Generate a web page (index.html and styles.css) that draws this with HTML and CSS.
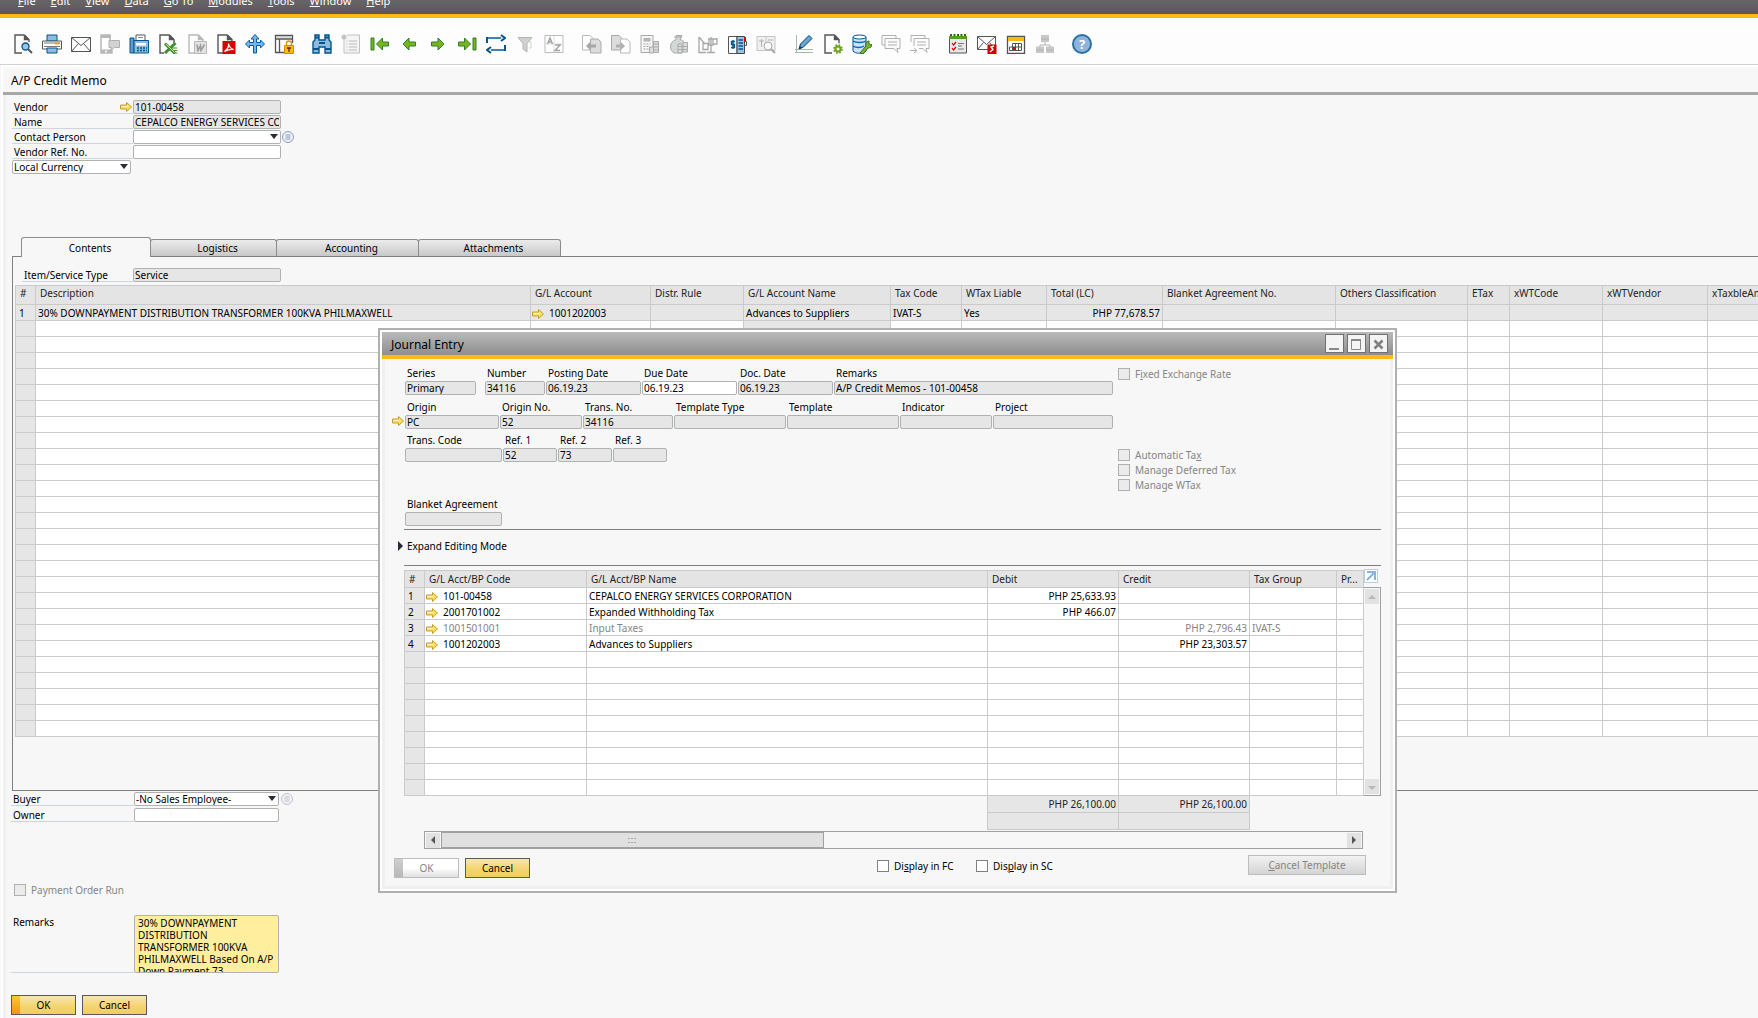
FILE: index.html
```html
<!DOCTYPE html>
<html lang="en">
<head>
    <meta charset="UTF-8">
    <meta name="viewport" content="width=device-width, initial-scale=1.0">
    <title>A/P Credit Memo</title>
    <link rel="stylesheet" href="styles.css">
</head>
<body>
    <!-- Shared symbols -->
    <svg class="symbols" aria-hidden="true">
        <symbol id="link-arrow" viewBox="0 0 12 10">
            <path d="M.5 3h6V.5L11.5 5l-5 4.500V7h-6z" fill="#fae05a" stroke="#c4a02a"/>
            <path d="M1.500 4.500h6" stroke="#fff6b8"/>
        </symbol>
        <symbol id="list-circle" viewBox="0 0 12 12">
            <circle cx="6" cy="6" r="5.500" fill="#eef1f8" stroke="currentColor"/>
            <path d="M3.500 4h5M3.500 6h5M3.500 8h5" stroke="currentColor"/>
        </symbol>
        <symbol id="page" viewBox="0 0 20 20">
            <path d="M11.500 1H2v18h7M11.500 1L16 5.500V10M11.500 1v4.500H16" fill="none" stroke="currentColor" stroke-width="1.400"/>
            <path d="M11.500 1L16 5.500h-4.500z" fill="currentColor"/>
        </symbol>
    </svg>

    <nav class="menu">
        <a href="#"><u>F</u>ile</a>
        <a href="#"><u>E</u>dit</a>
        <a href="#"><u>V</u>iew</a>
        <a href="#"><u>D</u>ata</a>
        <a href="#"><u>G</u>o To</a>
        <a href="#"><u>M</u>odules</a>
        <a href="#"><u>T</u>ools</a>
        <a href="#"><u>W</u>indow</a>
        <a href="#"><u>H</u>elp</a>
    </nav>

    <div class="toolbar">
        <div class="tool-group">
            <button type="button" aria-label="Preview"><svg viewBox="0 0 20 20"><g color="#555"><use href="#page"/></g><path d="M8 8h10v10H8z" fill="#fdfdfd"/><circle cx="12.500" cy="12.500" r="3.500" fill="#9cc3e6" stroke="#00558a" stroke-width="1.300"/><path d="M15 15l4 4" stroke="#555" stroke-width="2"/></svg></button>
            <button type="button" aria-label="Print"><svg viewBox="0 0 20 20"><path d="M5 1h10v6H5z" fill="#8fbbe0" stroke="#00558a"/><path d="M.5 7h19v8H.5z" fill="#fff" stroke="#555"/><path d="M2 9h16M2 12.500h16" stroke="#777"/><path d="M13 9.500h4" stroke="#e8a020" stroke-width="2"/><path d="M5 14h10v5H5z" fill="#8fbbe0" stroke="#00558a"/></svg></button>
            <button type="button" aria-label="Email"><svg viewBox="0 0 20 20"><path d="M.5 3.500h19v14H.5zM.5 3.500l9.500 8 9.500-8M.5 17.500l7-8M19.500 17.500l-7-8" fill="#fff" fill-opacity=".3" stroke="#555"/></svg></button>
            <button type="button" aria-label="SMS"><svg viewBox="0 0 20 20"><path d="M10 7V1H1v18h11v-3" fill="#fff" stroke="#b8b8b8" stroke-width="1.500"/><path d="M1 1h10v3H1zM1 15.500h11V19H1z" fill="#b8b8b8"/><circle cx="6" cy="17.500" r="1" fill="#fff"/><path d="M9 6.500h10.500v7h-5l-4 3 1-3H9z" fill="#d2d2d2" stroke="#b0b0b0"/></svg></button>
            <button type="button" aria-label="Fax"><svg viewBox="0 0 20 20"><path d="M7 1h9v6H7z" fill="#fff" stroke="#555"/><path d="M9 3.500h5" stroke="#888"/><path d="M1 4h4v15H1z" fill="#5f9bcf" stroke="#00558a"/><path d="M5 6.500h14.500V19H5z" fill="#8fbbe0" stroke="#00558a"/><path d="M7 9h10v2.500H7z" fill="#fff"/><path d="M8 14h10M8 16.500h10" stroke="#00558a" stroke-width="1.500" stroke-dasharray="2 1"/></svg></button>
            <button type="button" aria-label="Export to Excel"><svg viewBox="0 0 20 20"><g color="#555"><use href="#page"/></g><path d="M6 9h13v11H6z" fill="#fdfdfd"/><path d="M7 9.500l10 10M17.500 9l-10.500 10" stroke="#3f8f2a" stroke-width="3"/><path d="M8 10l9 9" stroke="#c8e6b4"/><path d="M13 14h6M15 16.500h4.500M16 19h3.500" stroke="#3f8f2a"/></svg></button>
            <button type="button" aria-label="Export to Word"><svg viewBox="0 0 20 20"><g color="#b8b8b8"><use href="#page"/></g><path d="M7.500 7.500h12v12h-12z" fill="#e2e2e2" stroke="#b8b8b8"/><path d="M10 10.500l1 6 2.500-5 .5 5 3.500-6" fill="none" stroke="#999" stroke-width="1.500"/></svg></button>
            <button type="button" aria-label="Export to PDF"><svg viewBox="0 0 20 20"><g color="#555"><use href="#page"/></g><path d="M6.500 7h13v13h-13z" fill="#d90000"/><path d="M8.500 17.500c3-2 4.500-5 4-8 .5 3 2 5 5 6-4-.5-6 .5-9 2z" fill="none" stroke="#fff" stroke-width="1.300"/></svg></button>
            <button type="button" aria-label="Launch Application"><svg viewBox="0 0 20 20"><path d="M10 .5l4 4.500h-2.500v3.500h4V6l4 4-4 4v-2.500h-4V19h-3v-7.500h-4V14l-4-4 4-4v2.500h4V5H6z" fill="#79b5ec" stroke="#0b5c9a"/></svg></button>
            <button type="button" aria-label="Lock Screen"><svg viewBox="0 0 20 20"><path d="M10 18.500H1.500v-17h17V9M1.500 5h17M5.500 5v13.500" fill="none" stroke="#555" stroke-width="1.300"/><path d="M2 3h16" stroke="#bbb"/><path d="M12.500 12V9.500a2.500 2.500 0 0 1 5 0V12" fill="none" stroke="#e0960a" stroke-width="1.500"/><path d="M10.500 11.500h9v8h-9z" fill="#fdb813" stroke="#d88a00"/><path d="M13 14h4M15 14v4" stroke="#4a3510" stroke-width="1.300"/></svg></button>
        </div>
        <div class="tool-group">
            <button type="button" aria-label="Find"><svg viewBox="0 0 20 20"><path d="M3 1h4v5h6V1h4v5l2 2v11h-6v-6H7v6H1V8l2-2z" fill="#8fbbe0" stroke="#00558a" stroke-width="1.400"/><path d="M3 3.500h4M13 3.500h4M1 15h6M13 15h6M7 9h6" stroke="#00558a" stroke-width="2"/></svg></button>
            <button type="button" aria-label="Add"><svg viewBox="0 0 20 20"><path d="M3 3.500V19h15.500V1H6" fill="#f4f4f4" stroke="#c0c0c0"/><circle cx="3" cy="3" r="2.500" fill="#c4c4c4"/><path d="M5.500 7h1M8 7h8M5.500 10h1M8 10h8M5.500 13h1M8 13h8M5.500 16h1M8 16h8" stroke="#bbb"/></svg></button>
            <button type="button" aria-label="First Record"><svg viewBox="0 0 20 20"><path d="M1 4h3v12H1zM12.500 4L6.500 10l6 6v-4h6V8h-6z" fill="#7ab51d" stroke="#2f7d32"/></svg></button>
            <button type="button" aria-label="Previous Record"><svg viewBox="0 0 20 20"><path d="M10 4L4 10l6 6v-4h6.500V8H10z" fill="#7ab51d" stroke="#2f7d32"/></svg></button>
            <button type="button" aria-label="Next Record"><svg viewBox="0 0 20 20"><path d="M10 4l6 6-6 6v-4H3.500V8H10z" fill="#7ab51d" stroke="#2f7d32"/></svg></button>
            <button type="button" aria-label="Last Record"><svg viewBox="0 0 20 20"><path d="M16 4h3v12h-3zM7.500 4l6 6-6 6v-4h-6V8h6z" fill="#7ab51d" stroke="#2f7d32"/></svg></button>
            <button type="button" aria-label="Refresh Record"><svg viewBox="0 0 20 20"><path d="M1 9V4h14M15 1l4 3-4 3M19 11v5H5M5 13l-4 3 4 3" fill="none" stroke="#00558a" stroke-width="2"/><path d="M2 4h14M18 16H4" stroke="#9cc8ee" stroke-width=".8"/></svg></button>
            <button type="button" aria-label="Filter"><svg viewBox="0 0 20 20"><path d="M3 3.500h14l-5 6V18l-4-3V9.500z" fill="#d0d0d0" stroke="#b4b4b4"/><path d="M14 8h2v6h-2" fill="none" stroke="#c8d8c8"/></svg></button>
            <button type="button" aria-label="Sort"><svg viewBox="0 0 20 20"><path d="M1 1.500h18v17H1z" fill="#fff" stroke="#bbb"/><path d="M10 2v16M2 10h16" stroke="#ddd"/><path d="M3.500 10L6 4l2.500 6M4.500 8h3M11 11h5l-5 5.500h5" fill="none" stroke="#a4a4a4" stroke-width="1.500"/></svg></button>
        </div>
        <div class="tool-group">
            <button type="button" aria-label="Base Document"><svg viewBox="0 0 20 20"><path d="M.5 1.500H8l3 3V16H.5z" fill="#fff" stroke="#b8b8b8"/><path d="M8.500 5H16l3 3v11H8.500z" fill="#dcdcdc" stroke="#aaa"/><path d="M8 8l-4 4 4 4v-2.500h6v-3H8z" fill="#a8a8a8"/></svg></button>
            <button type="button" aria-label="Target Document"><svg viewBox="0 0 20 20"><path d="M.5 1.500H8l3 3V16H.5z" fill="#dcdcdc" stroke="#aaa"/><path d="M9.500 5H16l3 3v11H9.500z" fill="#fff" stroke="#b8b8b8"/><path d="M10 8l4 4-4 4v-2.500H5v-3h5z" fill="#b0b0b0"/></svg></button>
            <button type="button" aria-label="Gross Profit"><svg viewBox="0 0 20 20"><path d="M1 1.500h12v17H1z" fill="#f6f6f6" stroke="#a8a8a8"/><path d="M3.500 4h7v3.500h-7z" fill="#b4b4b4"/><path d="M3.500 10h7M3.500 12.500h5M3.500 15h5" stroke="#a8a8a8" stroke-dasharray="2 1"/><path d="M13.500 7.500h5v11h-5zM9.500 13h4v6h-4zM13.500 10h5M13.500 13h5M13.500 16h5" fill="#ddd" stroke="#aaa"/></svg></button>
            <button type="button" aria-label="Payment Means"><svg viewBox="0 0 20 20"><path d="M7 1.500h6l-2 4c4 1 6 4 5 9l-3 4.500H5c-5-3-5-11 2-13.500z" fill="#d4d8d4" stroke="#a8aca8"/><path d="M5 3h8" stroke="#a8aca8"/><path d="M9 10h4v9H9zM14 8.500h4.500V18H14zM9 12.500h9M9 15.500h9" fill="#ddd" stroke="#aaa"/></svg></button>
            <button type="button" aria-label="Volume and Weight"><svg viewBox="0 0 20 20"><path d="M1 3v15.500h7M1 3l6 7M5 9.500h5v6H5zM9 18.500h8M13 18V3M10 5h9M11 5v6h4V5M19 4v6h-4" fill="none" stroke="#a8a8a8" stroke-width="1.300"/></svg></button>
            <button type="button" aria-label="Transaction Journal"><svg viewBox="0 0 20 20"><path d="M1.500 2.500H10v17H1.500z" fill="#fff" stroke="#555"/><path d="M10 2.500h7.500v17H10z" fill="#9cc3e6" stroke="#444"/><path d="M17 3h2v4h-2z" fill="#d90000"/><path d="M17.500 7.500h2v4h-2" fill="none" stroke="#555"/><path d="M11.500 6H16M11.500 9H16M11.500 12H16M11.500 15H16" stroke="#00558a" stroke-width="1.300"/><path d="M8 7.500H4.500v3h3v3H4M6 6v9" fill="none" stroke="#00558a" stroke-width="1.300"/></svg></button>
            <button type="button" aria-label="Journal Preview"><svg viewBox="0 0 20 20"><path d="M1 2.500h18v14H1zM10 2.500v14" fill="#f0f0f0" stroke="#c4c4c4"/><path d="M3 7h5M5.500 5v8M12 6h5" stroke="#b0b0b0"/><circle cx="12" cy="12" r="4" fill="#fafafa" stroke="#aaa"/><path d="M15 15l4 4" stroke="#aaa" stroke-width="2"/></svg></button>
        </div>
        <div class="tool-group">
            <button type="button" aria-label="Layout Designer"><svg viewBox="0 0 20 20"><path d="M2.500 1v18M1 15.500h18M1 18.500h18" stroke="#a8b8a8"/><path d="M5 15l1.500-5L15 1.500l3 3L9.500 13z" fill="#6ba5d6" stroke="#00406c"/><path d="M5 15l1-3 2 2z" fill="#00406c"/></svg></button>
            <button type="button" aria-label="Form Settings"><svg viewBox="0 0 20 20"><g color="#555"><use href="#page"/></g><circle cx="15" cy="15" r="6" fill="#fdfdfd"/><circle cx="15" cy="15" r="3.800" fill="none" stroke="#6aa514" stroke-width="2" stroke-dasharray="1.700 1.285"/><circle cx="15" cy="15" r="2.500" fill="none" stroke="#6aa514" stroke-width="2"/></svg></button>
            <button type="button" aria-label="Query Manager"><svg viewBox="0 0 20 20"><path d="M1 3v14c2 3 11 3 13 0V3" fill="#cfe2f4" stroke="#00558a"/><ellipse cx="7.500" cy="3" rx="6.500" ry="2" fill="#fff" stroke="#00558a"/><path d="M1 7c3 2 10 2 13 0M1 12c3 2 8 2 11 0" fill="none" stroke="#0b68ae" stroke-width="1.500"/><path d="M8 19l6-7c-1-3 1-5 3-5v3l2 1 1-1c0 3-2 4-4 4l-5 6z" fill="#76b82a" stroke="#386e1c"/></svg></button>
            <button type="button" aria-label="Messages"><svg viewBox="0 0 20 20"><path d="M4 4.500h15v10h-3l1 4-4-4H4z" fill="#fafafa" stroke="#b0b0b0"/><path d="M4 11H1V1.500h14v3M7 8h9M7 11h9" fill="none" stroke="#b0b0b0"/></svg></button>
            <button type="button" aria-label="Send Message"><svg viewBox="0 0 20 20"><path d="M4 12V4.500h15v10h-3l1 4-4-4H9M1 8V1.500h14v3M7 8h9M7 11h9M0 16.500h6M4 14l3 2.500L4 19" fill="none" stroke="#b0b0b0"/></svg></button>
        </div>
        <div class="tool-group">
            <button type="button" aria-label="Activities"><svg viewBox="0 0 20 20"><path d="M1.500 3h17v16h-17z" fill="#e8e8e8" stroke="#555"/><path d="M1 2h18v3H1z" fill="#55a01c"/><path d="M2 1h16" stroke="#2c6c18" stroke-dasharray="2 1.500" stroke-width="2"/><path d="M4 9l1.500 2L8 8M4 14l1.500 2L8 13" fill="none" stroke="#d90000" stroke-width="1.200"/><path d="M10 9.500h6M10 12h4M10 15h6" stroke="#777"/></svg></button>
            <button type="button" aria-label="Alerts"><svg viewBox="0 0 20 20"><path d="M.5 2.500h18v13H.5zM.5 2.500l9 8 9-8M.5 15.500l6-7M18.500 15.500l-6-7" fill="none" stroke="#555"/><path d="M10.500 10.500h9V20h-9z" fill="#d00000"/><path d="M17 12l-3 1 2 2.500-3 2.500" fill="none" stroke="#fff" stroke-width="1.400"/></svg></button>
            <button type="button" aria-label="Calendar"><svg viewBox="0 0 20 20"><path d="M1.500 2.500h17v17h-17z" fill="#fff" stroke="#555" stroke-width="1.300"/><path d="M2 3h16v4H2z" fill="#fdb813"/><path d="M6.500 9.500h9v7h-12v-3.500h12M6.500 9.500v7M9.500 9.500v7M12.500 9.500v7" fill="none" stroke="#555"/><path d="M7 13h3v3H7z" fill="#d90000"/></svg></button>
            <button type="button" aria-label="Organization"><svg viewBox="0 0 20 20"><path d="M6 1h8v7H6zM1 12.500h8V19H1zM11 12.500h8V19h-8z" fill="#c8c8c8"/><path d="M10 8v3M5 13v-2h10v2M1 16h8M11 16h8M6 5h8" fill="none" stroke="#b4b4b4"/></svg></button>
        </div>
        <div class="tool-group">
            <button type="button" aria-label="Help" class="help">?</button>
        </div>
    </div>

    <main>
        <h1>A/P Credit Memo</h1>
        <form class="memo">
            <div class="header-fields">
                <div class="row">
                    <label for="vendor">Vendor</label>
                    <svg class="arrow"><use href="#link-arrow"/></svg>
                    <input type="text" id="vendor" value="101-00458" readonly>
                </div>
                <div class="row">
                    <label for="vendorName">Name</label>
                    <input type="text" id="vendorName" value="CEPALCO ENERGY SERVICES CORPORATION" readonly>
                </div>
                <div class="row">
                    <label for="contact">Contact Person</label>
                    <span class="select"><select id="contact"><option></option></select></span>
                    <svg class="circle"><use href="#list-circle"/></svg>
                </div>
                <div class="row">
                    <label for="vendorRef">Vendor Ref. No.</label>
                    <input type="text" id="vendorRef">
                </div>
                <span class="select currency"><select aria-label="Currency"><option>Local Currency</option></select></span>
            </div>

            <div class="tabs">
                <button type="button" class="tab active">Contents</button>
                <button type="button" class="tab">Logistics</button>
                <button type="button" class="tab tab-wide">Accounting</button>
                <button type="button" class="tab tab-wide">Attachments</button>
            </div>
            <section class="panel">
                <div class="row item-type">
                    <label for="itemType">Item/Service Type</label>
                    <input type="text" id="itemType" value="Service" readonly>
                </div>
                <table class="grid lines">
                    <colgroup>
                        <col class="w-no"><col class="w-desc"><col class="w-account"><col class="w-rule"><col class="w-name"><col class="w-tax"><col class="w-wtax"><col class="w-total"><col class="w-blanket"><col class="w-others"><col class="w-etax"><col class="w-code"><col class="w-vendor"><col class="w-amount">
                    </colgroup>
                    <thead>
                        <tr>
                            <th>#</th><th>Description</th><th>G/L Account</th><th>Distr. Rule</th><th>G/L Account Name</th><th>Tax Code</th><th>WTax Liable</th><th>Total (LC)</th><th>Blanket Agreement No.</th><th>Others Classification</th><th>ETax</th><th>xWTCode</th><th>xWTVendor</th><th>xTaxbleAmount</th>
                        </tr>
                    </thead>
                    <tbody id="lineRows">
                        <tr class="locked">
                            <td>1</td><td>30% DOWNPAYMENT DISTRIBUTION TRANSFORMER 100KVA PHILMAXWELL</td><td><svg class="arrow"><use href="#link-arrow"/></svg>1001202003</td><td></td><td>Advances to Suppliers</td><td>IVAT-S</td><td>Yes</td><td class="num">PHP 77,678.57</td><td></td><td></td><td></td><td></td><td></td><td></td>
                        </tr>
                    </tbody>
                </table>
            </section>

            <div class="footer-fields">
                <div class="row">
                    <label for="buyer">Buyer</label>
                    <span class="select"><select id="buyer"><option>-No Sales Employee-</option></select></span>
                    <svg class="circle faded"><use href="#list-circle"/></svg>
                </div>
                <div class="row">
                    <label for="owner">Owner</label>
                    <input type="text" id="owner">
                </div>
                <label class="check disabled payment"><input type="checkbox" disabled>Payment Order Run</label>
                <div class="row remarks">
                    <label for="remarks">Remarks</label>
                    <textarea id="remarks">30% DOWNPAYMENT DISTRIBUTION TRANSFORMER 100KVA PHILMAXWELL Based On A/P Down Payment 73.</textarea>
                </div>
            </div>
            <div class="buttons">
                <button type="button" class="btn default">OK</button>
                <button type="button" class="btn">Cancel</button>
            </div>
        </form>
    </main>

    <!-- Journal Entry window -->
    <section class="window" role="dialog" aria-labelledby="journalTitle">
        <header class="titlebar">
            <h2 id="journalTitle">Journal Entry</h2>
            <button type="button" aria-label="Minimize"><svg viewBox="0 0 16 16"><path d="M3 13h10" stroke="#888" stroke-width="2"/></svg></button>
            <button type="button" aria-label="Maximize"><svg viewBox="0 0 16 16"><path d="M3.500 4h9v9.500h-9z" fill="none" stroke="#888"/><path d="M3 4h10" stroke="#888" stroke-width="2"/></svg></button>
            <button type="button" aria-label="Close"><svg viewBox="0 0 16 16"><path d="M4.500 4.500l8 8M12.500 4.500l-8 8" stroke="#808080" stroke-width="2.500"/></svg></button>
        </header>
        <form class="journal">
            <div class="journal-top">
                <div class="journal-fields">
                    <div class="fields fields-1">
                        <div class="field series"><label for="series">Series</label><input type="text" id="series" value="Primary" readonly></div>
                        <div class="field"><label for="number">Number</label><input type="text" id="number" value="34116" readonly></div>
                        <div class="field"><label for="posting">Posting Date</label><input type="text" id="posting" value="06.19.23" readonly></div>
                        <div class="field"><label for="due">Due Date</label><input type="text" id="due" value="06.19.23"></div>
                        <div class="field"><label for="doc">Doc. Date</label><input type="text" id="doc" value="06.19.23" readonly></div>
                        <div class="field"><label for="jeRemarks">Remarks</label><input type="text" id="jeRemarks" value="A/P Credit Memos - 101-00458" readonly></div>
                    </div>
                    <div class="fields fields-2">
                        <svg class="arrow"><use href="#link-arrow"/></svg>
                        <div class="field"><label for="origin">Origin</label><input type="text" id="origin" value="PC" readonly></div>
                        <div class="field"><label for="originNo">Origin No.</label><input type="text" id="originNo" value="52" readonly></div>
                        <div class="field"><label for="transNo">Trans. No.</label><input type="text" id="transNo" value="34116" readonly></div>
                        <div class="field"><label for="tplType">Template Type</label><input type="text" id="tplType" readonly></div>
                        <div class="field"><label for="tpl">Template</label><input type="text" id="tpl" readonly></div>
                        <div class="field"><label for="indicator">Indicator</label><input type="text" id="indicator" readonly></div>
                        <div class="field"><label for="project">Project</label><input type="text" id="project" readonly></div>
                    </div>
                    <div class="fields fields-3">
                        <div class="field"><label for="transCode">Trans. Code</label><input type="text" id="transCode" readonly></div>
                        <div class="field"><label for="ref1">Ref. 1</label><input type="text" id="ref1" value="52" readonly></div>
                        <div class="field"><label for="ref2">Ref. 2</label><input type="text" id="ref2" value="73" readonly></div>
                        <div class="field"><label for="ref3">Ref. 3</label><input type="text" id="ref3" readonly></div>
                    </div>
                    <div class="fields fields-3 blanket">
                        <div class="field"><label for="blanket">Blanket Agreement</label><input type="text" id="blanket" readonly></div>
                    </div>
                </div>
                <div class="journal-checks">
                    <label class="check disabled"><input type="checkbox" disabled><span>F<u>i</u>xed Exchange Rate</span></label>
                    <div class="tax-checks">
                        <label class="check disabled"><input type="checkbox" disabled><span>Automatic Ta<u>x</u></span></label>
                        <label class="check disabled"><input type="checkbox" disabled>Manage Deferred Tax</label>
                        <label class="check disabled"><input type="checkbox" disabled>Manage WTax</label>
                    </div>
                </div>
            </div>
            <button type="button" class="expand">Expand Editing Mode</button>

            <div class="entries-wrap">
                <table class="grid entries">
                    <colgroup>
                        <col class="w-no"><col class="w-bp"><col><col class="w-money"><col class="w-money"><col class="w-group"><col class="w-pr">
                    </colgroup>
                    <thead>
                        <tr><th>#</th><th>G/L Acct/BP Code</th><th>G/L Acct/BP Name</th><th>Debit</th><th>Credit</th><th>Tax Group</th><th>Pr...</th></tr>
                    </thead>
                    <tbody id="entryRows">
                        <tr><td>1</td><td><svg class="arrow"><use href="#link-arrow"/></svg>101-00458</td><td>CEPALCO ENERGY SERVICES CORPORATION</td><td class="num">PHP 25,633.93</td><td></td><td></td><td></td></tr>
                        <tr><td>2</td><td><svg class="arrow"><use href="#link-arrow"/></svg>2001701002</td><td>Expanded Withholding Tax</td><td class="num">PHP 466.07</td><td></td><td></td><td></td></tr>
                        <tr class="auto"><td>3</td><td><svg class="arrow"><use href="#link-arrow"/></svg>1001501001</td><td>Input Taxes</td><td></td><td class="num">PHP 2,796.43</td><td>IVAT-S</td><td></td></tr>
                        <tr><td>4</td><td><svg class="arrow"><use href="#link-arrow"/></svg>1001202003</td><td>Advances to Suppliers</td><td></td><td class="num">PHP 23,303.57</td><td></td><td></td></tr>
                    </tbody>
                    <tfoot>
                        <tr><td colspan="3"></td><td class="num total">PHP 26,100.00</td><td class="num total">PHP 26,100.00</td><td colspan="2"></td></tr>
                        <tr><td colspan="3"></td><td class="total"></td><td class="total"></td><td colspan="2"></td></tr>
                    </tfoot>
                </table>
                <div class="side">
                    <button type="button" class="popout" aria-label="Open in window"><svg viewBox="0 0 12 12"><path d="M2 2h8v8M10 2L2 10" fill="none" stroke="#8fb0d8" stroke-width="2"/></svg></button>
                    <div class="vscroll">
                        <button type="button" aria-label="Scroll up"><svg viewBox="0 0 14 14"><path d="M3 9l4-4 4 4z" fill="#b8b8b8"/></svg></button>
                        <button type="button" aria-label="Scroll down"><svg viewBox="0 0 14 14"><path d="M3 6l4 4 4-4z" fill="#b8b8b8"/></svg></button>
                    </div>
                </div>
            </div>
            <div class="hscroll">
                <button type="button" aria-label="Scroll left"><svg viewBox="0 0 14 14"><path d="M9 3L5 7l4 4z" fill="#555"/></svg></button>
                <div class="thumb"><svg viewBox="0 0 9 7"><path d="M0 1.500h9M0 5.500h9" stroke="#aaa" stroke-dasharray="2 1"/></svg></div>
                <button type="button" aria-label="Scroll right"><svg viewBox="0 0 14 14"><path d="M5 3l4 4-4 4z" fill="#555"/></svg></button>
            </div>
            <div class="buttons">
                <button type="button" class="btn default" disabled>OK</button>
                <button type="button" class="btn">Cancel</button>
                <div class="display-checks">
                    <label class="check"><input type="checkbox"><span>Di<u>s</u>play in FC</span></label>
                    <label class="check"><input type="checkbox"><span>Dis<u>p</u>lay in SC</span></label>
                </div>
                <button type="button" class="btn template" disabled><u>C</u>ancel Template</button>
            </div>
        </form>
    </section>

    <script>
        // Pad a grid body with empty rows
        function addEmptyRows(id, count) {
            const body = document.getElementById(id);
            const columns = body.rows[0].cells.length;
            for (let i = 0; i < count; i++) {
                const row = body.insertRow();
                for (let c = 0; c < columns; c++) {
                    row.insertCell();
                }
            }
        }
        addEmptyRows('lineRows', 26);
        addEmptyRows('entryRows', 9);
    </script>
</body>
</html>
```
FILE: styles.css
```css
* {
    box-sizing: border-box;
}
body {
    margin: 0;
    min-height: 100vh;
    position: relative;
    overflow: hidden;
    background-color: #f7f7f7;
    color: #000;
    font-family: "Noto Sans", sans-serif;
    font-size: 10px;
    line-height: 14px;
}
button, input, select, textarea {
    font: inherit;
    color: inherit;
    margin: 0;
}
button {
    padding: 0;
    cursor: pointer;
}
h1, h2 {
    margin: 0;
    font-size: 12px;
    font-weight: normal;
}
.symbols {
    display: none;
}

/* Menu and toolbar */
.menu {
    display: flex;
    align-items: center;
    gap: 15px;
    height: 30px;
    margin-top: -12px;
    padding-left: 18px;
    background: linear-gradient(#747174, #5a575a);
    border-bottom: 4px solid #feb913;
}
.menu a {
    color: #fff;
    font-size: 11px;
    text-decoration: none;
}
.toolbar {
    display: flex;
    align-items: center;
    gap: 9px;
    height: 47px;
    padding: 6px 8px 0;
    background-color: #fdfdfd;
    border-bottom: 1px solid #d0d0d0;
}
.tool-group {
    display: flex;
}
.toolbar button {
    display: flex;
    justify-content: center;
    align-items: center;
    width: 29px;
    height: 24px;
    border: none;
    background: none;
}
.toolbar svg {
    width: 20px;
    height: 20px;
}
.toolbar .help {
    width: 20px;
    height: 20px;
    margin: 0 4px;
    border: 2px solid #2a6f9e;
    border-radius: 10px;
    background-color: #8fb4dc;
    color: #fff;
    font-size: 13px;
    font-weight: bold;
}

/* A/P Credit Memo */
main {
    margin-left: 1px;
    border-left: 2px solid #fff;
}
h1 {
    padding: 7px 8px 6px;
    line-height: 14px;
    border-top: 2px solid #fff;
    border-bottom: 3px solid #a7a7a7;
    height: 30px;
}
.memo {
    padding: 5px 0 3px 6px;
    border-left: 3px solid #f0f0f0;
}
.row {
    display: flex;
    position: relative;
    height: 14px;
    margin-bottom: 1px;
}
.row > label {
    width: 121px;
    padding-left: 2px;
    line-height: 15px;
    border-bottom: 1px solid #ccd6dc;
}
.arrow {
    width: 12px;
    height: 10px;
    flex: none;
}
.row .arrow {
    margin: 2px 1px 0 -13px;
}
.circle {
    width: 12px;
    height: 12px;
    margin: 1px 0 0 1px;
    color: #8c9cc0;
}
.circle.faded {
    margin-left: 2px;
    color: #c4c4c4;
}
input[type="text"], select {
    width: 148px;
    height: 14px;
    padding: 0 1px;
    border: 1px solid #aeb2b2;
    border-radius: 2px;
    background-color: #fff;
    line-height: 12px;
}
input[readonly] {
    background-color: #e6e6e6;
}
.select {
    display: block;
    position: relative;
}
.select select {
    display: block;
    appearance: none;
}
.select::after {
    content: "";
    position: absolute;
    top: 4px;
    right: 3px;
    border: 4px solid transparent;
    border-top: 5px solid #2b2b35;
    border-bottom: none;
}
.currency {
    width: 119px;
}
.currency select {
    width: 119px;
}

/* Tabs */
.tabs {
    display: flex;
    align-items: flex-end;
    margin-top: 63px;
    padding-left: 9px;
}
.tab {
    width: 127px;
    height: 17px;
    margin-left: -1px;
    padding-left: 8px;
    border: 1px solid #8c8c8c;
    border-bottom: none;
    border-radius: 3px 3px 0 0;
    background: linear-gradient(#ececec, #c8c8c8);
}
.tab-wide {
    width: 143px;
}
.tab.active {
    position: relative;
    width: 130px;
    height: 20px;
    margin: 0 0 -1px;
    background: #f7f7f7;
}
.panel {
    padding: 11px 0 53px 2px;
    border: 1px solid #808080;
    border-right: none;
    overflow: hidden;
}
.item-type {
    padding-left: 7px;
    margin-bottom: 3px;
}
.item-type > label {
    width: 111px;
}

/* Grids */
.grid {
    border-collapse: collapse;
    table-layout: fixed;
}
.grid tr {
    height: 16px;
}
.grid th, .grid td {
    padding: 0 2px;
    border: 1px solid #cacaca;
    overflow: hidden;
    white-space: nowrap;
    text-align: left;
    font-weight: normal;
}
.grid th {
    padding: 0 4px;
    background-color: #e4e4e4;
    color: #222;
}
.grid td {
    background-color: #fff;
}
.grid tbody td:first-child, .grid .locked td {
    background-color: #e6e6e6;
}
.grid td:first-child {
    padding-left: 3px;
}
.grid .num {
    text-align: right;
}
.grid .arrow {
    margin: 0 5px 0 -1px;
    vertical-align: middle;
}
.grid .auto td:not(:first-child) {
    color: #858585;
}
.lines {
    width: 1791px;
}
.lines thead tr {
    height: 19px;
}
.lines th {
    vertical-align: top;
}
.lines td:nth-child(5) {
    background-color: #e6e6e6;
}
.w-no { width: 20px; }
.w-desc { width: 495px; }
.w-account { width: 120px; }
.w-rule { width: 93px; }
.w-name { width: 147px; }
.w-tax { width: 71px; }
.w-wtax { width: 85px; }
.w-total { width: 116px; }
.w-blanket { width: 173px; }
.w-others { width: 132px; }
.w-etax { width: 42px; }
.w-code { width: 93px; }
.w-vendor { width: 105px; }
.w-amount { width: 99px; }
.w-bp { width: 162px; }
.w-money { width: 131px; }
.w-group { width: 87px; }
.w-pr { width: 27px; }

/* Footer of the memo */
.footer-fields {
    padding-top: 1px;
}
.footer-fields .row {
    margin-bottom: 2px;
    margin-left: -1px;
}
.footer-fields .row > label {
    width: 123px;
}
.footer-fields input[type="text"], .footer-fields select {
    width: 145px;
}
.check {
    display: flex;
    align-items: center;
    gap: 5px;
    height: 15px;
}
.check input {
    appearance: none;
    width: 12px;
    height: 12px;
    border: 1px solid #808080;
    background-color: #fff;
}
.check.disabled {
    color: #858585;
}
.check.disabled input {
    border-color: #b0b0b0;
    background-color: #ebebeb;
}
.payment {
    margin: 60px 0 18px 2px;
}
.footer-fields .remarks {
    height: 58px;
    margin-bottom: 0;
}
textarea {
    display: block;
    width: 145px;
    height: 58px;
    padding: 1px 3px;
    border: 1px solid #aeb2b2;
    border-radius: 2px;
    background-color: #ffee9e;
    line-height: 12px;
    overflow: hidden;
    resize: none;
}
.buttons {
    display: flex;
    gap: 6px;
    margin: 22px 0 0 -1px;
}
.btn {
    width: 65px;
    height: 20px;
    border: 1px solid #5a5a5a;
    background: linear-gradient(#f7e6b0, #f3d46c 60%, #f0cf5c);
}
.btn.default {
    background: linear-gradient(#fbc934, #ee9418) left / 8px 100% no-repeat, linear-gradient(#f7e6b0, #f3d46c 60%, #f0cf5c);
}
.btn:disabled {
    border-color: #bdbdbd;
    color: #858585;
    background: linear-gradient(#f2f2f2, #d4d4d4);
    cursor: default;
}
.btn.default:disabled {
    background: linear-gradient(#d0d0d0, #b8b8b8) left / 8px 100% no-repeat, linear-gradient(#fff, #fff 50%, #e0e0e0);
}

/* Journal Entry window */
.window {
    position: absolute;
    top: 328px;
    left: 378px;
    right: 361px;
    padding: 2px;
    border: 2px solid #b0b0b0;
    background-color: #fff;
}
.titlebar {
    display: flex;
    align-items: center;
    gap: 3px;
    height: 27px;
    padding: 0 5px 0 9px;
    background: linear-gradient(#bababa, #8e8e8e);
    border-bottom: 4px solid #feb913;
}
.titlebar h2 {
    flex: 1;
    padding-top: 3px;
}
.titlebar button {
    width: 19px;
    height: 19px;
    border: 1px solid #707070;
    background-color: #f4f4f4;
}
.titlebar svg {
    display: block;
    width: 16px;
    height: 16px;
}
.journal {
    padding: 7px 9px 8px 7px;
    border: 3px solid #f0f0f0;
    border-top: none;
    background-color: #f7f7f7;
}
.journal-top {
    display: flex;
    gap: 5px;
    margin-left: 12px;
    padding: 0 0 3px 1px;
    border-bottom: 1px solid #808080;
}
.fields {
    display: grid;
    gap: 1px;
    position: relative;
    margin-bottom: 5px;
}
.fields-1 {
    grid-template-columns: 79px 60px 95px 95px 95px 279px;
}
.fields-2 {
    grid-template-columns: 94px 82px 90px 112px 112px 92px 120px;
    margin-bottom: 4px;
}
.fields-3 {
    grid-template-columns: 97px 54px 54px 54px;
}
.fields .arrow {
    position: absolute;
    top: 16px;
    left: -13px;
}
.field label {
    display: block;
    height: 15px;
    padding-left: 2px;
}
.field input[type="text"] {
    display: block;
    width: 100%;
}
.field.series input {
    width: 71px;
}
.fields.blanket {
    margin: 35px 0 0;
}
.tax-checks {
    margin-top: 66px;
}
.expand {
    display: flex;
    align-items: center;
    gap: 4px;
    margin: 9px 0 12px 6px;
    border: none;
    background: none;
}
.expand::before {
    content: "";
    border: 5px solid transparent;
    border-left-color: #26263a;
    border-right: none;
}
.entries-wrap {
    display: flex;
    margin-left: 12px;
    padding-top: 4px;
    border-top: 1px solid #808080;
}
.entries {
    flex: 1;
    width: 100%;
}
.entries thead tr {
    height: 17px;
}
.grid tfoot tr {
    height: 17px;
}
.grid tfoot td {
    border: none;
    background: none;
}
.grid tfoot .total {
    border: 1px solid #cacaca;
    background-color: #e6e6e6;
    color: #222;
}
.side {
    width: 17px;
}
.popout {
    display: block;
    width: 14px;
    height: 14px;
    margin: -1px 0 4px;
    border: 1px solid #b8d0e4;
    background-color: #fff;
}
.popout svg {
    display: block;
}
.vscroll {
    display: flex;
    flex-direction: column;
    justify-content: space-between;
    height: 209px;
    padding: 1px;
    border: 1px solid #a0a0a0;
    border-left: none;
}
.vscroll button, .hscroll button {
    width: 14px;
    height: 15px;
    border: none;
    background-color: #e2e2e2;
}
.vscroll svg, .hscroll button svg {
    display: block;
    width: 14px;
    height: 14px;
}
.hscroll {
    display: flex;
    align-items: center;
    gap: 1px;
    height: 18px;
    margin: 1px 18px 0 32px;
    padding: 0 1px;
    border: 1px solid #a0a0a0;
}
.thumb {
    display: flex;
    align-items: center;
    justify-content: center;
    width: 41%;
    height: 16px;
    border: 1px solid #a0a0a0;
    background-color: #e0e0e0;
}
.thumb svg {
    width: 9px;
    height: 7px;
}
.hscroll button:last-child {
    margin-left: auto;
}
.journal .buttons {
    margin: 9px 15px 0 2px;
}
.display-checks {
    display: flex;
    margin-left: auto;
}
.display-checks .check {
    width: 99px;
}
.template {
    width: 118px;
    margin: -3px 0 3px 167px;
}
```
